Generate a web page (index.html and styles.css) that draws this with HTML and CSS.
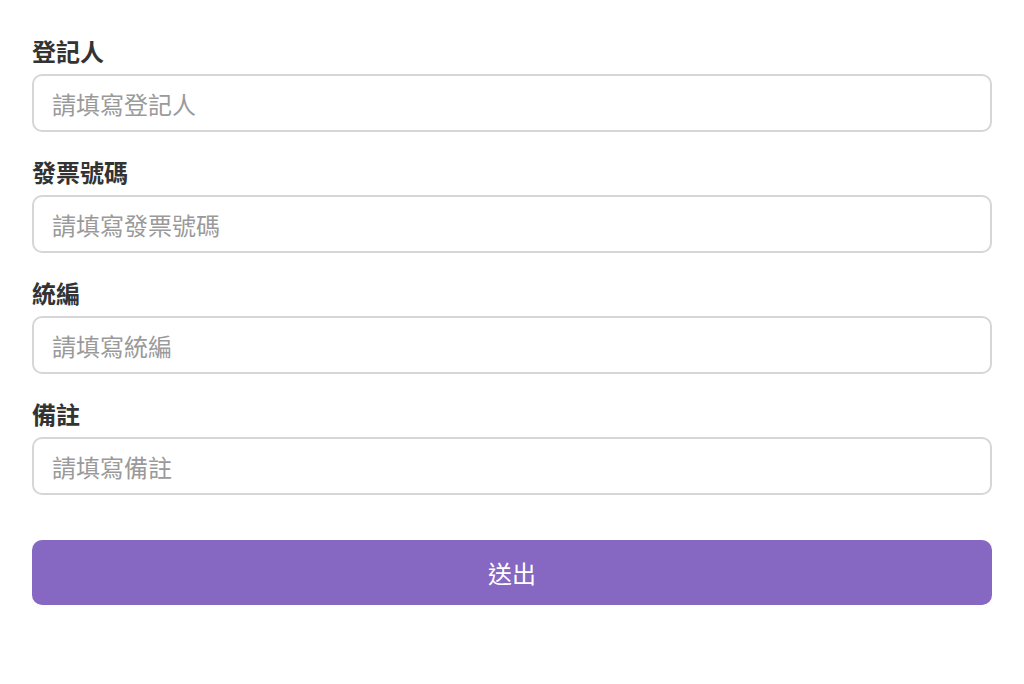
FILE: index.html
```html
<!DOCTYPE html>
<html lang="zh-Hant">
<head>
<meta charset="utf-8">
<link rel="stylesheet" href="styles.css">
</head>
<body>
<form class="form">
  <div class="group">
    <label class="label">登記人</label>
    <input class="input" type="text" placeholder="請填寫登記人">
  </div>
  <div class="group">
    <label class="label">發票號碼</label>
    <input class="input" type="text" placeholder="請填寫發票號碼">
  </div>
  <div class="group">
    <label class="label">統編</label>
    <input class="input" type="text" placeholder="請填寫統編">
  </div>
  <div class="group">
    <label class="label">備註</label>
    <input class="input" type="text" placeholder="請填寫備註">
  </div>
  <button class="submit" type="button">送出</button>
</form>
</body>
</html>
```
FILE: styles.css
```css
html, body {
  margin: 0;
  padding: 0;
  background: #ffffff;
}
body {
  font-family: "Noto Sans CJK TC", "Noto Sans", sans-serif;
}
.form {
  padding: 35px 32px 0 32px;
  display: flex;
  flex-direction: column;
  gap: 24px;
}
.group {
  display: flex;
  flex-direction: column;
  gap: 8px;
}
.label {
  font-size: 24px;
  line-height: 31px;
  font-weight: 700;
  color: #333333;
}
.input {
  box-sizing: border-box;
  height: 58px;
  width: 100%;
  border: 2px solid #d6d6d6;
  border-radius: 10px;
  padding: 0 18px;
  font-family: inherit;
  font-size: 24px;
  color: #333;
  background: #fff;
  outline: none;
}
.input::placeholder {
  color: #9a9a9a;
}
.submit {
  margin-top: 21px;
  height: 65px;
  width: 100%;
  border: none;
  border-radius: 10px;
  background: #8667c2;
  color: #ffffff;
  font-family: inherit;
  font-size: 24px;
  cursor: pointer;
}
```
